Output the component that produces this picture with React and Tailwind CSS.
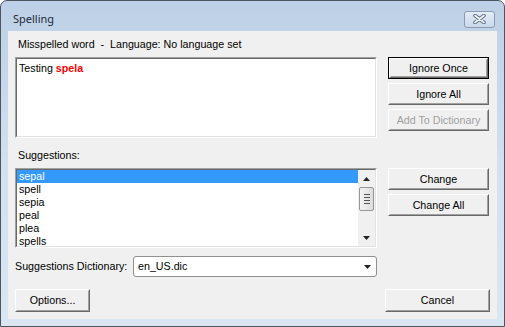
import React from 'react'

const suggestions = ['sepal', 'spell', 'sepia', 'peal', 'plea', 'spells']

function Button({ children, className = '', isDefault = false, disabled = false }) {
  const body = (
    <div className="flex h-full w-full border border-t-white border-l-white border-r-[#696969] border-b-[#696969]">
      <div
        className={
          'flex h-full w-full items-center justify-center border border-t-[#f0f0f0] border-l-[#f0f0f0] border-r-[#a0a0a0] border-b-[#a0a0a0] ' +
          (disabled ? 'text-[#a0a0a0]' : 'text-black')
        }
      >
        {children}
      </div>
    </div>
  )
  return (
    <div className={'flex bg-[#f0f0f0] ' + className}>
      {isDefault ? <div className="flex h-full w-full border border-black">{body}</div> : body}
    </div>
  )
}

function Sunken({ className = '', children }) {
  return (
    <div className={'flex border border-t-[#a0a0a0] border-l-[#a0a0a0] border-b-white border-r-white ' + className}>
      <div className="flex h-full w-full border border-t-[#696969] border-l-[#696969] border-b-[#e3e3e3] border-r-[#e3e3e3] bg-white">
        {children}
      </div>
    </div>
  )
}

function CloseButton() {
  return (
    <div className="flex h-[17px] w-[31px] items-center justify-center rounded-[3px] border border-[#8a9bb2] bg-gradient-to-b from-[#e4edf7] to-[#c9d8ea]">
      <svg width="13" height="10" viewBox="0 0 13 10">
        <path d="M2 1.5 L11 8.5 M11 1.5 L2 8.5" stroke="#5f6f84" strokeWidth="3.6" strokeLinecap="round" />
        <path d="M2 1.5 L11 8.5 M11 1.5 L2 8.5" stroke="#f4f7fb" strokeWidth="1.6" strokeLinecap="round" />
      </svg>
    </div>
  )
}

function Scrollbar() {
  return (
    <div className="flex h-full w-[17px] flex-col items-center bg-[#f0f0f0]">
      <div className="flex h-[17px] w-full items-center justify-center">
        <svg width="7" height="4" viewBox="0 0 7 4">
          <path d="M3.5 0 L7 4 L0 4 Z" fill="#222" />
        </svg>
      </div>
      <div className="flex h-[24px] w-[15px] flex-col items-center justify-center gap-[2px] rounded-[2px] border border-[#979797] bg-gradient-to-r from-[#f3f3f3] to-[#dcdcdc]">
        <div className="h-px w-[6px] bg-[#555]" />
        <div className="h-px w-[6px] bg-[#555]" />
        <div className="h-px w-[6px] bg-[#555]" />
        <div className="h-px w-[6px] bg-[#555]" />
      </div>
      <div className="flex-1" />
      <div className="flex h-[17px] w-full items-center justify-center">
        <svg width="7" height="4" viewBox="0 0 7 4">
          <path d="M0 0 L7 0 L3.5 4 Z" fill="#222" />
        </svg>
      </div>
    </div>
  )
}

export default function App() {
  return (
    <div className="flex h-[327px] w-[505px] flex-col overflow-hidden rounded-t-[7px] border border-[#4d5560] bg-gradient-to-b from-[#bdd0e6] via-[#d2e0f0] to-[#dae6f3] font-['Liberation_Sans',Arial,sans-serif] text-[10.7px] text-black">
      <div className="flex h-[30px] shrink-0 items-center justify-between pl-[12px] pr-[9px] pt-[6px]">
        <span className="font-['Noto_Sans',sans-serif] text-[11px] text-[#1e2a38]">Spelling</span>
        <CloseButton />
      </div>
      <div className="flex flex-1 px-[7px] pb-[7px]">
        <div className="flex flex-1 flex-col bg-[#f0f0f0] pl-[7px] pr-[8px]">
          <div className="flex h-[26px] items-center pl-[3px]">
            Misspelled word&nbsp; - &nbsp;Language: No language set
          </div>
          <div className="flex">
            <Sunken className="h-[81px] w-[362px]">
              <div className="pl-[2px] pt-[3px] leading-[13px]">
                Testing <span className="font-bold text-[#ff0000]">spela</span>
              </div>
            </Sunken>
            <div className="ml-[11px] flex w-[101px] flex-col gap-[4px]">
              <Button isDefault className="h-[22px]">Ignore Once</Button>
              <Button className="h-[22px]">Ignore All</Button>
              <Button disabled className="h-[22px]">Add To Dictionary</Button>
            </div>
          </div>
          <div className="flex h-[30px] items-center pl-[3px] pt-[4px]">Suggestions:</div>
          <div className="flex">
            <Sunken className="h-[80px] w-[362px]">
              <div className="flex flex-1 flex-col">
                {suggestions.map((s, i) => (
                  <div
                    key={s}
                    className={
                      'flex h-[13px] items-center pl-[2px] leading-[13px] ' +
                      (i === 0 ? 'bg-[#3399ff] text-white' : '')
                    }
                  >
                    {s}
                  </div>
                ))}
              </div>
              <Scrollbar />
            </Sunken>
            <div className="ml-[11px] flex w-[101px] flex-col gap-[4px]">
              <Button className="h-[22px]">Change</Button>
              <Button className="h-[22px]">Change All</Button>
            </div>
          </div>
          <div className="mt-[8px] flex items-center">
            <span className="w-[118px]">Suggestions Dictionary:</span>
            <div className="flex h-[21px] w-[244px] items-center justify-between rounded-[3px] border border-[#8e8f8f] bg-white pl-[4px] pr-[5px]">
              <span>en_US.dic</span>
              <svg width="7" height="4" viewBox="0 0 7 4">
                <path d="M0 0 L7 0 L3.5 4 Z" fill="#222" />
              </svg>
            </div>
          </div>
          <div className="mt-[12px] flex justify-between">
            <Button className="h-[23px] w-[75px]">Options...</Button>
            <Button className="-mr-[1px] h-[23px] w-[105px]">Cancel</Button>
          </div>
        </div>
      </div>
    </div>
  )
}
